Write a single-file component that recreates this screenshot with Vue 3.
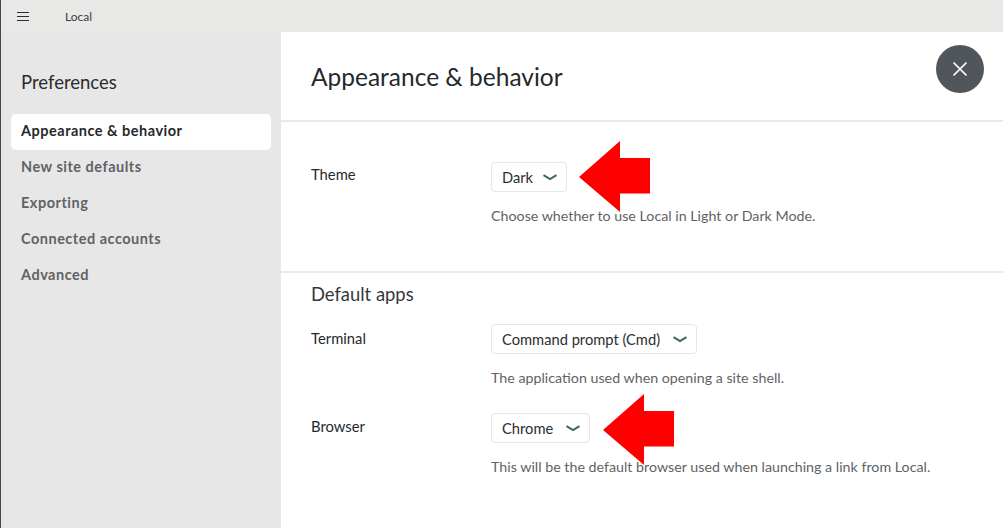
<script setup>
const navItems = [
  { label: 'Appearance & behavior', active: true },
  { label: 'New site defaults' },
  { label: 'Exporting' },
  { label: 'Connected accounts' },
  { label: 'Advanced' }
]
</script>

<template>
  <div class="window">
    <header class="titlebar">
      <svg class="menu-icon" width="12" height="10" viewBox="0 0 12 10">
        <path d="M0 1.5h12M0 5.5h12M0 9.5h12" stroke="#2b2e31" stroke-width="1" fill="none" />
      </svg>
      <span class="app-name">Local</span>
    </header>

    <div class="body">
      <aside class="sidebar">
        <h2 class="side-title">Preferences</h2>
        <nav class="nav">
          <a
            v-for="item in navItems"
            :key="item.label"
            class="nav-item"
            :class="{ active: item.active }"
          >{{ item.label }}</a>
        </nav>
      </aside>

      <main class="content">
        <div class="page-head">
          <h1 class="page-title">Appearance &amp; behavior</h1>
          <button class="close-btn" aria-label="Close">
            <svg width="16" height="16" viewBox="0 0 16 16">
              <path d="M1.5 1.5l13 13M14.5 1.5l-13 13" stroke="#fff" stroke-width="1.7" fill="none" />
            </svg>
          </button>
        </div>

        <section class="section theme">
          <div class="row">
            <label class="row-label">Theme</label>
            <div class="row-field">
              <div class="select select-short">
                <span>Dark</span>
                <svg class="chev" width="14" height="7" viewBox="0 0 14 7">
                  <path d="M.5 1.2L7 5.2l6.5-4" stroke="#3a6b58" stroke-width="2" fill="none" />
                </svg>
              </div>
              <p class="hint">Choose whether to use Local in Light or Dark Mode.</p>
            </div>
          </div>
        </section>

        <section class="section apps">
          <h3 class="section-title">Default apps</h3>
          <div class="row">
            <label class="row-label">Terminal</label>
            <div class="row-field">
              <div class="select">
                <span>Command prompt (Cmd)</span>
                <svg class="chev" width="14" height="7" viewBox="0 0 14 7">
                  <path d="M.5 1.2L7 5.2l6.5-4" stroke="#3a6b58" stroke-width="2" fill="none" />
                </svg>
              </div>
              <p class="hint">The application used when opening a site shell.</p>
            </div>
          </div>
          <div class="row browser">
            <label class="row-label">Browser</label>
            <div class="row-field">
              <div class="select">
                <span>Chrome</span>
                <svg class="chev" width="14" height="7" viewBox="0 0 14 7">
                  <path d="M.5 1.2L7 5.2l6.5-4" stroke="#3a6b58" stroke-width="2" fill="none" />
                </svg>
              </div>
              <p class="hint">This will be the default browser used when launching a link from Local.</p>
            </div>
          </div>
        </section>
      </main>
    </div>

    <svg class="arrow arrow-theme" width="72" height="72" viewBox="0 0 72 72">
      <path d="M1 36L42 0V17H72V52.5H42V71Z" fill="#ff0000" />
    </svg>
    <svg class="arrow arrow-browser" width="72" height="72" viewBox="0 0 72 72">
      <path d="M1 36L42 0V17H72V52.5H42V71Z" fill="#ff0000" />
    </svg>
  </div>
</template>

<style scoped>
.window {
  position: relative;
  width: 1003px;
  height: 528px;
  overflow: hidden;
  display: flex;
  flex-direction: column;
  background: #e7e7e7;
  border-left: 1px solid #44484c;
  box-sizing: border-box;
  font-family: "Lato", "Open Sans", sans-serif;
  color: #26292c;
}

.titlebar {
  height: 32px;
  flex: none;
  display: flex;
  align-items: center;
  background: #e8e8e6;
  padding-left: 16px;
}

.menu-icon {
  display: block;
}

.app-name {
  margin-left: 36px;
  font-size: 12px;
  color: #3a3d40;
}

.body {
  flex: 1;
  display: flex;
  min-height: 0;
}

.sidebar {
  width: 280px;
  flex: none;
  background: #e7e7e7;
  box-sizing: border-box;
  padding: 0 10px;
}

.side-title {
  margin: 38px 0 20px 10px;
  font-size: 18.5px;
  line-height: 24px;
  font-weight: 400;
  color: #2a2d30;
}

.nav {
  display: flex;
  flex-direction: column;
}

.nav-item {
  height: 36px;
  line-height: 34px;
  padding-left: 10px;
  border-radius: 5px;
  font-size: 14.5px;
  font-weight: 700;
  letter-spacing: 0.5px;
  color: #606366;
}

.nav-item.active {
  background: #fff;
  color: #26292c;
}

.content {
  flex: 1;
  background: #fff;
  min-width: 0;
}

.page-head {
  height: 90px;
  box-sizing: border-box;
  padding-left: 30px;
  display: flex;
  align-items: flex-start;
  justify-content: space-between;
  border-bottom: 2px solid #e9e9e9;
}

.page-title {
  margin: 28px 0 0;
  font-size: 24.5px;
  line-height: 34px;
  font-weight: 400;
  color: #26292c;
}

.close-btn {
  width: 48px;
  height: 48px;
  margin: 13px 19px 0 0;
  border: none;
  border-radius: 50%;
  background: #51565c;
  display: flex;
  align-items: center;
  justify-content: center;
  padding: 0;
}

.section {
  padding-left: 30px;
}

.theme {
  height: 151px;
  box-sizing: border-box;
  padding-top: 40px;
  border-bottom: 2px solid #e9e9e9;
}

.theme .row-label {
  margin-top: -2px;
}

.apps {
  padding-top: 9px;
}

.section-title {
  margin: 0 0 18px;
  font-size: 18.4px;
  line-height: 24px;
  font-weight: 400;
  color: #34373a;
}

.row {
  display: flex;
}

.browser {
  margin-top: 26px;
}

.browser .row-label {
  margin-top: -1px;
}

.row-label {
  width: 180px;
  flex: none;
  font-size: 14.8px;
  line-height: 28px;
  color: #26292c;
}

.row-field {
  display: flex;
  flex-direction: column;
  align-items: flex-start;
}

.select {
  height: 30px;
  box-sizing: border-box;
  display: flex;
  align-items: center;
  gap: 13px;
  padding: 0 9px 0 10px;
  border: 1px solid #e6e6e6;
  border-radius: 4px;
  font-size: 14.7px;
  color: #2b2e31;
}

.select-short {
  gap: 10px;
}

.chev {
  display: block;
  margin-top: 1px;
}

.hint {
  margin: 15px 0 0;
  font-size: 14.25px;
  line-height: 18px;
  color: #5f6366;
}

.arrow {
  position: absolute;
}

.arrow-theme {
  left: 577px;
  top: 141px;
}

.arrow-browser {
  left: 601px;
  top: 394px;
}
</style>

<style>
html, body {
  margin: 0;
  background: #e7e7e7;
}
</style>
